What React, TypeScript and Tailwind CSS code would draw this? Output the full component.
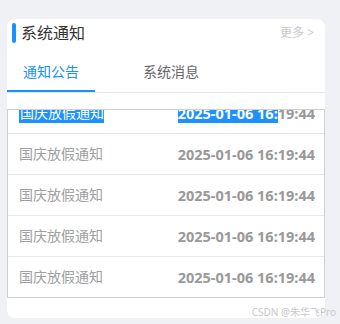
import { useState } from 'react'

const notices = [
  { title: '国庆放假通知', time: '2025-01-06 16:19:44' },
  { title: '国庆放假通知', time: '2025-01-06 16:19:44' },
  { title: '国庆放假通知', time: '2025-01-06 16:19:44' },
  { title: '国庆放假通知', time: '2025-01-06 16:19:44' },
  { title: '国庆放假通知', time: '2025-01-06 16:19:44' },
]

const font = "font-['Noto_Sans','Noto_Sans_CJK_SC',sans-serif]"

export default function App() {
  const [tab, setTab] = useState(0)

  return (
    <div className={`relative h-[324px] w-[340px] overflow-hidden bg-[#f0f1f5] pt-[19px] pl-[7px] ${font}`}>
      <div className="flex h-[299px] w-[318px] flex-col overflow-hidden rounded-lg bg-white">
        {/* Header */}
        <div className="flex h-[28px] shrink-0 items-center justify-between pl-[5px] pr-[11px]">
          <div className="flex items-center gap-[5px]">
            <span className="h-5 w-1 rounded-sm bg-[#1890ff]" />
            <span className="text-[16px] leading-none text-[#333]">系统通知</span>
          </div>
          <span className="text-[12px] text-[#c8c8c8]">更多 &gt;</span>
        </div>

        {/* Tabs */}
        <div className="mt-[5px] flex shrink-0 gap-8 border-b border-[#e4e7ed]">
          {['通知公告', '系统消息'].map((label, i) => (
            <button
              key={label}
              onClick={() => setTab(i)}
              className={`flex h-10 items-center border-b-2 px-4 pt-[1px] text-[14px] ${
                tab === i ? 'border-[#1890ff] text-[#1890ff]' : 'border-transparent text-[#666]'
              }`}
            >
              {label}
            </button>
          ))}
        </div>

        {/* List */}
        <div className="mt-4 h-[189px] shrink-0 overflow-hidden border border-[#cfcfcf]">
          <div className="-mt-[17px]">
            {notices.map((n, i) => (
              <div
                key={i}
                className="flex h-[41px] items-center justify-between border-b border-[#e8e8e8] pl-[11px] pr-[9px] text-[14px] leading-5"
              >
                {i === 0 ? (
                  <>
                    <span className="bg-[#1e90ff] pl-px text-white">{n.title}</span>
                    <span className="text-[14.5px] font-bold text-[#999]">
                      <span className="bg-[#1e90ff] text-white">2025-01-06 16:</span>19:44
                    </span>
                  </>
                ) : (
                  <>
                    <span className="text-[#a0a0a0]">{n.title}</span>
                    <span className="text-[14.5px] font-bold text-[#999]">{n.time}</span>
                  </>
                )}
              </div>
            ))}
          </div>
        </div>
      </div>

      <span className="absolute bottom-[4px] right-[4px] text-[10px] text-[#c8c8c8]">CSDN @朱华飞Pro</span>
    </div>
  )
}
